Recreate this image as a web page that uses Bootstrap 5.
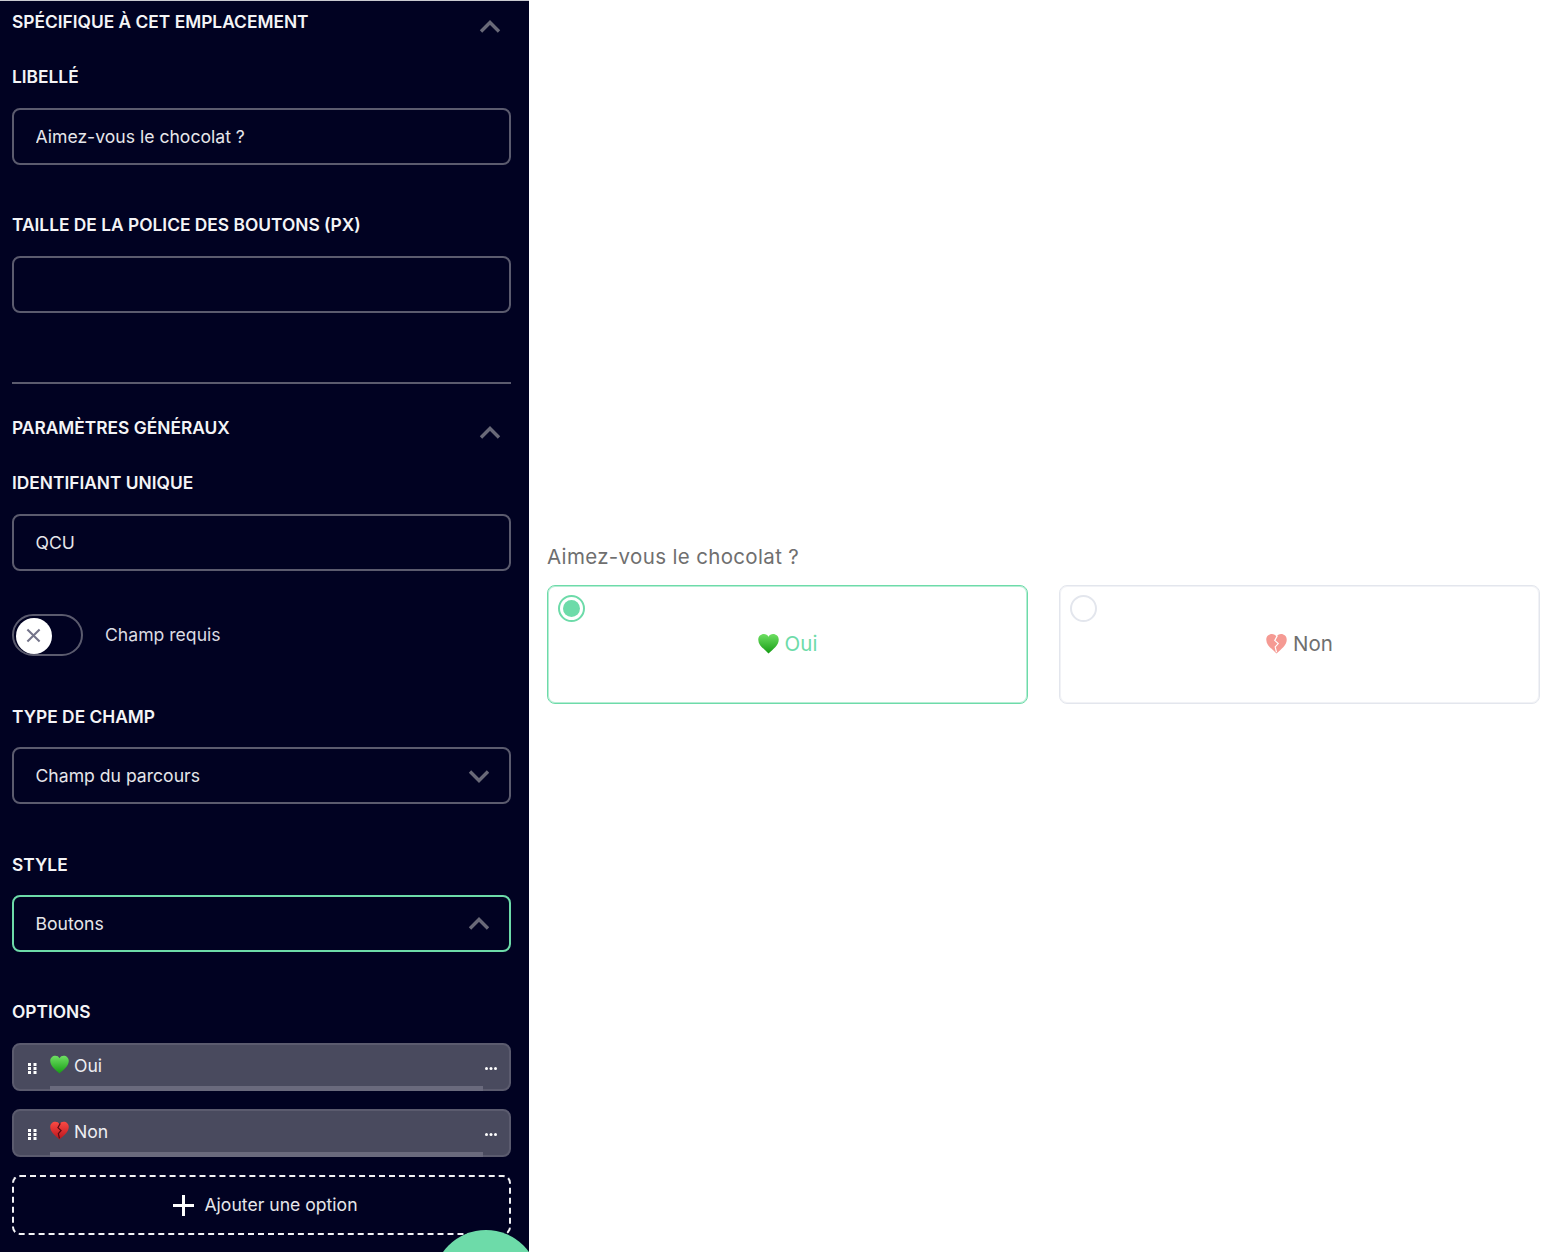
<!DOCTYPE html>
<html lang="fr">
<head>
<meta charset="utf-8">
<title>Champ QCU</title>
<link href="https://cdn.jsdelivr.net/npm/bootstrap@5.3.0/dist/css/bootstrap.min.css" rel="stylesheet">
<style>
html,body{height:100%;margin:0;overflow:hidden;background:#fff;font-family:Inter,"Liberation Sans",sans-serif}
.shell{height:1252px}
.side{width:529px;flex:none;background:#010222;color:#fff;padding:9px 18px 0 12px;border-top:1px solid #c9cad0;position:relative;overflow:hidden}
.sec-title,.fld-label{font-size:17.35px;font-weight:600;line-height:24px;color:#f4f4f6;margin:0;display:block}
.sec-row{margin-bottom:31px}
.sec-row svg{margin:10px 10px 0 0}
.fld-label{margin-bottom:19px}
.fld-label.tight{margin-bottom:18px}
.dark-input.form-control,.dark-input.form-select{height:57px;background-color:#010222;color:#e6e6ea;border:2px solid #5b5b6e;border-radius:8px;font-size:17.6px;padding:0 21.5px;box-shadow:none}
.dark-input.form-select{padding-top:1px;background-image:url("data:image/svg+xml,%3Csvg xmlns='http://www.w3.org/2000/svg' viewBox='0 0 22 14'%3E%3Cpath d='M2 2.5l9 9 9-9' fill='none' stroke='%23696978' stroke-width='3.4'/%3E%3C/svg%3E");background-size:22px 14px;background-position:right 19px center}
.dark-input.form-select.is-open{border-color:#6ddba9;background-image:url("data:image/svg+xml,%3Csvg xmlns='http://www.w3.org/2000/svg' viewBox='0 0 22 14'%3E%3Cpath d='M2 11.5l9-9 9 9' fill='none' stroke='%23696978' stroke-width='3.4'/%3E%3C/svg%3E")}
.gap-a{margin-top:48px}
.gap-b{margin-top:49px}
.rule{border:0;border-top:2px solid #5b5b6e;opacity:1;margin:69px 0 32px}
.tog-row{margin-top:43px;height:42px;gap:22px;font-size:17.6px;color:#dcdce2}
.tog-row span{margin-top:1px}
.tog{width:71px;height:42px;border:2px solid #5b5b6e;border-radius:21px;padding:1.5px 0 0 1.5px;flex:none}
.tog-knob{width:36px;height:36px;border-radius:50%;background:#fff}
.opt{height:48px;background:#494a5e;border:2px solid #5b5b6e;border-radius:8px;color:#eeeef2;font-size:17.6px;margin-bottom:18px}
.opt-main{height:41px;padding:0 12px 0 14px}
.opt-main span{margin-top:1px}
.opt-grip{margin:6px 13px 0 0;flex:none}
.opt-heart{flex:none;margin:-3px 5px 0 0}
.opt-more{margin:6px 0 0 auto;flex:none}
.opt-bar{height:5px;background:#6a6a7d;margin:0 26px 0 36px}
.add-btn.btn{width:100%;height:60px;border:2px dashed #f2f2f5;border-radius:8px;background:transparent;color:#e6e6ea;font-size:17.6px;gap:10px;padding:0 0 0 8px}
.fab{position:absolute;left:433px;top:1229px;width:106px;height:106px;border-radius:50%;background:#6ddba9}
.stage{padding:0 10px 6px 18px}
.q-label{font-size:20.5px;line-height:28px;color:#6f6f6f;margin-bottom:14px;letter-spacing:.34px}
.choice{height:119px;border:1px solid #e3e6ed;box-shadow:inset 0 0 0 1px rgba(227,230,237,.5);border-radius:8px;font-size:20.5px;color:#6f6f6f;position:relative;width:481px}
.choice.picked{border-color:#6ddba9;box-shadow:inset 0 0 0 1px rgba(109,219,169,.5);color:#6ddba9}
.choice span:last-child{margin-top:1px}
.choice-wrap{gap:31px}
.dot-ring{position:absolute;left:10px;top:9px;width:27px;height:27px;border:2px solid #e3e6ed;border-radius:50%;background:#fff}
.picked .dot-ring{border-color:#6ddba9;padding:3px}
.picked .dot-ring i{display:block;width:17px;height:17px;border-radius:50%;background:#6ddba9}
.choice svg{margin:-1px 6px 0 0}
</style>
</head>
<body>
<svg width="0" height="0" class="position-absolute">
  <defs>
    <linearGradient id="gG" x1="0" y1="0" x2="0" y2="1"><stop offset="0" stop-color="#6fe063"/><stop offset="1" stop-color="#159c14"/></linearGradient>
    <linearGradient id="gR" x1="0" y1="0" x2="0" y2="1"><stop offset="0" stop-color="#fb4a44"/><stop offset="1" stop-color="#b8141c"/></linearGradient>
    <symbol id="heart" viewBox="0 0 24 24"><path d="M12 23.500C7 18.500 .3 14 .3 7.600 .3 3.500 3.300 1 6.800 1 9 1 11 2 12 4.200 13 2 15 1 17.200 1 20.700 1 23.700 3.500 23.700 7.600 23.700 14 17 18.500 12 23.500Z"/></symbol>
  </defs>
</svg>
<div class="shell d-flex">
  <aside class="side">
    <div class="sec-row d-flex justify-content-between align-items-start">
      <h2 class="sec-title">SPÉCIFIQUE À CET EMPLACEMENT</h2>
      <svg width="22" height="14" viewBox="0 0 22 14"><path d="M2 11.500l9-9 9 9" fill="none" stroke="#696978" stroke-width="3.400"/></svg>
    </div>
    <label class="fld-label" for="f1">LIBELLÉ</label>
    <input id="f1" class="form-control dark-input" value="Aimez-vous le chocolat ?">
    <label class="fld-label gap-a" for="f2">TAILLE DE LA POLICE DES BOUTONS (PX)</label>
    <input id="f2" class="form-control dark-input">
    <hr class="rule">
    <div class="sec-row d-flex justify-content-between align-items-start">
      <h2 class="sec-title">PARAMÈTRES GÉNÉRAUX</h2>
      <svg width="22" height="14" viewBox="0 0 22 14"><path d="M2 11.500l9-9 9 9" fill="none" stroke="#696978" stroke-width="3.400"/></svg>
    </div>
    <label class="fld-label" for="f3">IDENTIFIANT UNIQUE</label>
    <input id="f3" class="form-control dark-input" value="QCU">
    <div class="tog-row d-flex align-items-center">
      <div class="tog"><div class="tog-knob d-flex align-items-center justify-content-center">
        <svg width="15" height="15" viewBox="0 0 16 16"><path d="M1.500 1.500l13 13M14.500 1.500l-13 13" stroke="#74748a" stroke-width="2.200" fill="none"/></svg>
      </div></div>
      <span>Champ requis</span>
    </div>
    <label class="fld-label gap-b tight" for="f4">TYPE DE CHAMP</label>
    <select id="f4" class="form-select dark-input"><option>Champ du parcours</option></select>
    <label class="fld-label gap-b tight" for="f5">STYLE</label>
    <select id="f5" class="form-select dark-input is-open"><option>Boutons</option></select>
    <label class="fld-label gap-a">OPTIONS</label>
    <div class="opt">
      <div class="opt-main d-flex align-items-center">
        <svg class="opt-grip" width="9" height="11" viewBox="0 0 9 11" fill="#fff"><rect x="0" y="0" width="3" height="3"/><rect x="5.500" y="0" width="3" height="3"/><rect x="0" y="4" width="3" height="3"/><rect x="5.500" y="4" width="3" height="3"/><rect x="0" y="8" width="3" height="3"/><rect x="5.500" y="8" width="3" height="3"/></svg>
        <svg class="opt-heart" width="19" height="19" fill="url(#gG)"><use href="#heart"/></svg>
        <span>Oui</span>
        <svg class="opt-more" width="12" height="3" viewBox="0 0 12 3" fill="#fff"><circle cx="1.500" cy="1.500" r="1.500"/><circle cx="6" cy="1.500" r="1.500"/><circle cx="10.500" cy="1.500" r="1.500"/></svg>
      </div>
      <div class="opt-bar"></div>
    </div>
    <div class="opt">
      <div class="opt-main d-flex align-items-center">
        <svg class="opt-grip" width="9" height="11" viewBox="0 0 9 11" fill="#fff"><rect x="0" y="0" width="3" height="3"/><rect x="5.500" y="0" width="3" height="3"/><rect x="0" y="4" width="3" height="3"/><rect x="5.500" y="4" width="3" height="3"/><rect x="0" y="8" width="3" height="3"/><rect x="5.500" y="8" width="3" height="3"/></svg>
        <svg class="opt-heart" width="19" height="19" viewBox="0 0 24 24"><use href="#heart" width="24" height="24" fill="url(#gR)"/><path d="M13 3L10 8.500l4 3.500-3.500 4 1.500 6" fill="none" stroke="#5a0a14" stroke-width="1.500"/></svg>
        <span>Non</span>
        <svg class="opt-more" width="12" height="3" viewBox="0 0 12 3" fill="#fff"><circle cx="1.500" cy="1.500" r="1.500"/><circle cx="6" cy="1.500" r="1.500"/><circle cx="10.500" cy="1.500" r="1.500"/></svg>
      </div>
      <div class="opt-bar"></div>
    </div>
    <button type="button" class="btn add-btn d-flex align-items-center justify-content-center">
      <svg width="21" height="21" viewBox="0 0 21 21"><path d="M10.500 0v21M0 10.500h21" stroke="#fff" stroke-width="3" fill="none"/></svg>
      <span>Ajouter une option</span>
    </button>
    <div class="fab"></div>
  </aside>
  <main class="stage flex-grow-1 d-flex flex-column justify-content-center">
    <div class="q-label">Aimez-vous le chocolat ?</div>
    <div class="choice-wrap d-flex">
      <div class="choice picked d-flex align-items-center justify-content-center">
        <span class="dot-ring"><i></i></span>
        <svg width="21" height="21" fill="url(#gG)"><use href="#heart"/></svg><span>Oui</span>
      </div>
      <div class="choice d-flex align-items-center justify-content-center">
        <span class="dot-ring"></span>
        <svg width="21" height="21" viewBox="0 0 24 24"><use href="#heart" width="24" height="24" fill="#f59a93"/><path d="M13 3L10 8.500l4 3.500-3.500 4 1.500 6" fill="none" stroke="#fff" stroke-width="1.300"/></svg><span>Non</span>
      </div>
    </div>
  </main>
</div>
<script src="https://cdn.jsdelivr.net/npm/bootstrap@5.3.0/dist/js/bootstrap.bundle.min.js"></script>
</body>
</html>
